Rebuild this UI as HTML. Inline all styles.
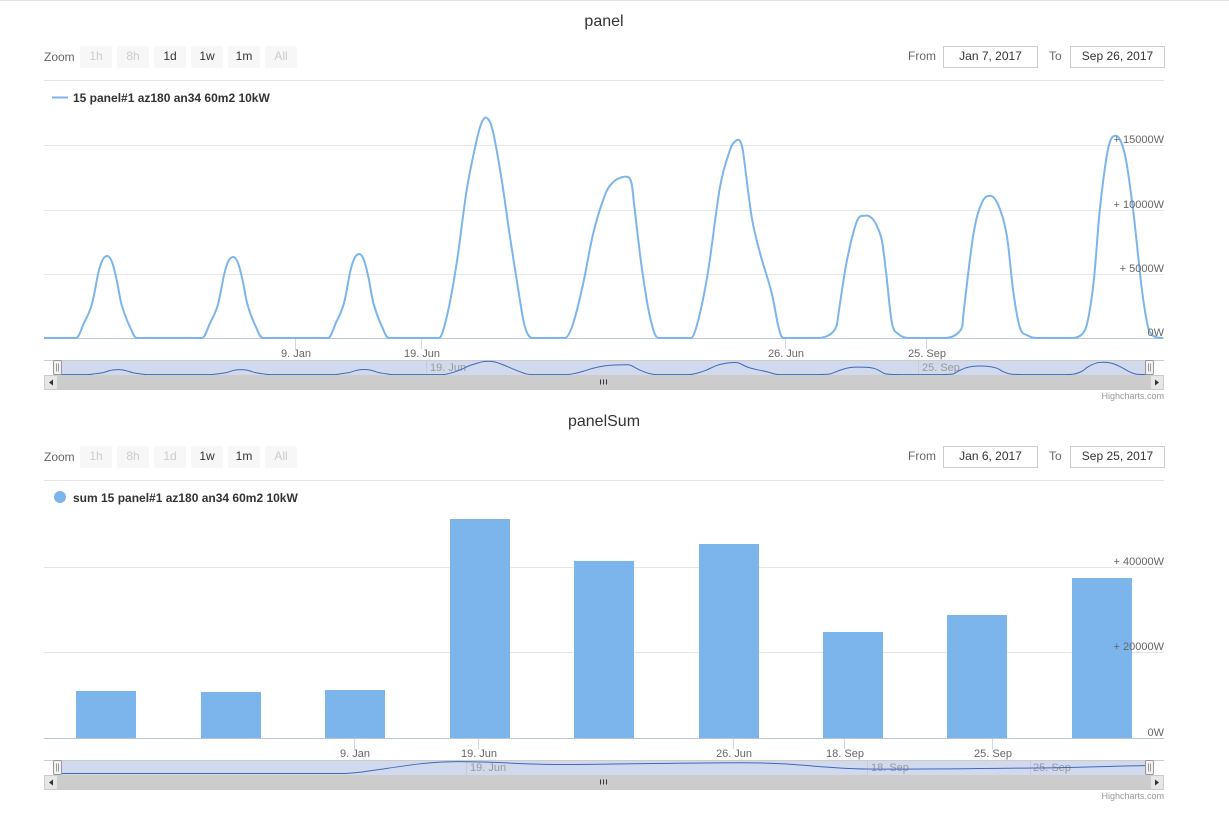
<!DOCTYPE html>
<html>
<head>
<meta charset="utf-8">
<style>
html,body{margin:0;padding:0;background:#fff;width:1229px;height:818px;overflow:hidden}
svg{display:block;font-family:"Liberation Sans",sans-serif}
.t{font-size:16px;fill:#333;text-anchor:middle}
.z{font-size:12px;fill:#666}
.b{fill:#f7f7f7}
.on{font-size:12px;fill:#333;text-anchor:middle}
.off{font-size:12px;fill:#ccc;text-anchor:middle}
.inp{fill:#fff;stroke:#ccc;stroke-width:1}
.v{font-size:12px;fill:#333;text-anchor:middle}
.lg{font-size:12px;font-weight:bold;fill:#333}
.g{stroke:#e6e6e6;stroke-width:1;fill:none}
.y{font-size:11px;fill:#666;text-anchor:end}
.x{font-size:11px;fill:#666;text-anchor:middle}
.tick{stroke:#ccd6eb;stroke-width:1}
.n{font-size:11px;fill:#999}
.nt{stroke:#c4cbdd;stroke-width:1}
.cr{font-size:9px;fill:#999;text-anchor:end}
.mask{fill:#6685c2;fill-opacity:.3}
.h{fill:#f2f2f2;stroke:#999;stroke-width:1}
.hl{stroke:#999;stroke-width:1}
.sb{fill:#ccc}
.sbb{fill:#e6e6e6;stroke:#ccc;stroke-width:1}
.ar{fill:#333}
</style>
</head>
<body>
<svg width="1229" height="818" viewBox="0 0 1229 818" xmlns="http://www.w3.org/2000/svg">
<defs>
<path id="l1" fill="none" vector-effect="non-scaling-stroke" d="M44 338L76 338C79 338 81.4 328.5 84 323S89.3 313.3 91.7 305S96.5 280.5 98.3 273S101 262.8 102.5 260S105.7 256 107.3 256S110.4 258 112 262S115.1 272.8 116.7 280S119.5 297.2 121.7 305S127.4 321.5 130 327S134 338 137 338L202 338C205 338 207.4 328.6 210 323.2S215.3 313.6 217.7 305.4S222.5 281.2 224.3 273.8S227 263.7 228.5 260.9S231.7 257 233.3 257S236.4 259 238 263S241.1 273.6 242.7 280.7S245.5 297.7 247.7 305.4S253.4 321.7 256 327.1S260 338 263 338L328 338C331 338 333.4 328.3 336 322.6S341.3 312.7 343.7 304.2S348.5 279.1 350.3 271.4S353 261 354.5 258.1S357.7 254 359.3 254S362.4 256.1 364 260.2S367.1 271.2 368.7 278.6S371.5 296.2 373.7 304.2S379.4 321.1 382 326.7S386 338 389 338L439 338C441.5 338 443.7 329.5 446.7 317S453.4 284.2 456.7 263S463.4 210.5 466.7 190S474.2 151.2 476.7 140S480 126.8 481.5 123S484.3 117.5 485.7 117.5S488.7 119.4 490 122S491.8 126.5 493.3 133S498.9 162.7 501.7 180S507.2 218.7 510 237S515.8 275 518.3 290S522.6 319 525 327S529.5 338 532.5 338L565 338C567.5 338 570.3 332.2 573.3 323S580 298 583.3 283S589.7 247.7 593.3 233S601.7 203.5 605 195S610.5 185 613.3 182S619.1 178.2 621.7 177.3S626.5 176.5 628 177S630.5 178.7 631.5 183S632.8 193 634 203S639 248 641.7 267S647.2 305.2 650 317S655 338 658.5 338L691 338C693 338 695.4 331.3 698.3 320S704.7 292.2 708.3 270S716.4 207 720 187S727.5 157.6 730 150S733.6 143.2 735 141.5S737.3 139.7 738.3 139.7S740.2 140.8 741 143S742.4 147.5 743.3 153S748.9 200.3 751.7 217S756.7 240.3 760 253S768.7 280.8 771.7 293S776.3 318.5 778.3 326S781 338 784 338L818 338C822 338 829 336.5 833.3 331.7S837.3 321 838.3 315S843.6 277.2 846.7 261.7S853.7 229.4 856.7 221.7S862.5 216.3 865 215.7S869.5 216.2 871.7 218S878.6 227.7 881 236.7S884.2 257.5 886 271.7S889.7 311.3 891.7 321.7S895.1 331.3 898.3 334S904 338 911 338L945 338C950 338 955 336.5 959.3 331.7S962.3 323 963.3 315S970.2 253.7 973.3 235S978.9 209.5 981.7 203S987.2 195.7 990 195.7S995.5 198.5 998.3 205S1004.2 220.5 1006.7 235S1011.1 276.2 1013.3 291.7S1017.5 320.7 1020 328S1025.3 334 1028.3 335.7S1033 338 1038 338L1072 338C1077 338 1082 336 1085 330S1090.8 305.3 1093.3 285S1097.5 230.8 1100 208S1105.6 160 1108.3 148S1113.2 135.7 1116 135.7S1122.1 142.3 1125 155S1130.5 189.5 1133.3 211.7S1139.2 268.6 1141.7 288S1146.3 320 1148.3 328S1155 338 1163 338"/>
<clipPath id="nc"><rect x="57" y="355" width="1093" height="25"/></clipPath>
</defs>

<rect x="0" y="0" width="1229" height="1" fill="#e5e5e5"/>

<!-- panel -->
<text class="t" x="604" y="26">panel</text>
<text class="z" x="44" y="61">Zoom</text>
<rect class="b" x="80" y="46" width="32" height="22" rx="2"/><text class="off" x="96" y="60">1h</text>
<rect class="b" x="117" y="46" width="32" height="22" rx="2"/><text class="off" x="133" y="60">8h</text>
<rect class="b" x="154" y="46" width="32" height="22" rx="2"/><text class="on" x="170" y="60">1d</text>
<rect class="b" x="191" y="46" width="32" height="22" rx="2"/><text class="on" x="207" y="60">1w</text>
<rect class="b" x="228" y="46" width="32" height="22" rx="2"/><text class="on" x="244" y="60">1m</text>
<rect class="b" x="265" y="46" width="32" height="22" rx="2"/><text class="off" x="281" y="60">All</text>
<text class="z" x="908" y="60">From</text>
<rect class="inp" x="943.5" y="46.5" width="94" height="21"/><text class="v" x="990.5" y="60">Jan 7, 2017</text>
<text class="z" x="1049" y="60">To</text>
<rect class="inp" x="1070.5" y="46.5" width="94" height="21"/><text class="v" x="1117.5" y="60">Sep 26, 2017</text>
<path class="g" d="M44 80.5H1164"/>
<path d="M52 97.5H68" stroke="#7cb5ec" stroke-width="2"/>
<text class="lg" x="73" y="102">15 panel#1 az180 an34 60m2 10kW</text>

<path class="g" d="M44 145.5H1164M44 210.5H1164M44 274.5H1164"/>
<path d="M44 338.5H1164" stroke="#b9c4d8" stroke-width="1"/>
<path class="tick" d="M295.5 339V349M421.5 339V349M785.5 339V349M926.5 339V349"/>
<use href="#l1" stroke="#7cb5ec" stroke-width="2"/>
<text class="y" x="1164" y="143">+ 15000W</text>
<text class="y" x="1164" y="208">+ 10000W</text>
<text class="y" x="1164" y="272">+ 5000W</text>
<text class="y" x="1164" y="336">0W</text>
<text class="x" x="296" y="357">9. Jan</text>
<text class="x" x="422" y="357">19. Jun</text>
<text class="x" x="786" y="357">26. Jun</text>
<text class="x" x="927" y="357">25. Sep</text>

<!-- navigator 1 -->
<rect class="mask" x="57" y="361" width="1093" height="14"/>
<path d="M44 360.5H1164" stroke="#ccc" stroke-width="1"/>
<path class="nt" d="M426.5 361V375M918.5 361V375"/>
<text class="n" x="430" y="371">19. Jun</text>
<text class="n" x="922" y="371">25. Sep</text>
<g clip-path="url(#nc)"><use href="#l1" transform="matrix(.977 0 0 .0608 13.5 354.05)" stroke="#3e68bc" stroke-width="1"/></g>
<rect class="sb" x="44" y="375" width="1120" height="15"/>
<rect class="sbb" x="44.5" y="375.5" width="13" height="14"/>
<rect class="sbb" x="1150.5" y="375.5" width="13" height="14"/>
<path class="ar" d="M49 382.5L53 379.5V385.5ZM1159 382.5L1155 379.5V385.5Z"/>
<path d="M600.5 379.5V384.5M603.5 379.5V384.5M606.5 379.5V384.5" stroke="#333" stroke-width="1"/>
<rect class="h" x="53.5" y="360.5" width="8" height="14" rx="1"/>
<path class="hl" d="M56.5 363.5V371.5M58.5 363.5V371.5"/>
<rect class="h" x="1145.5" y="360.5" width="8" height="14" rx="1"/>
<path class="hl" d="M1148.5 363.5V371.5M1150.5 363.5V371.5"/>
<text class="cr" x="1164" y="399">Highcharts.com</text>

<!-- panelSum -->
<text class="t" x="604" y="426">panelSum</text>
<text class="z" x="44" y="461">Zoom</text>
<rect class="b" x="80" y="446" width="32" height="22" rx="2"/><text class="off" x="96" y="460">1h</text>
<rect class="b" x="117" y="446" width="32" height="22" rx="2"/><text class="off" x="133" y="460">8h</text>
<rect class="b" x="154" y="446" width="32" height="22" rx="2"/><text class="off" x="170" y="460">1d</text>
<rect class="b" x="191" y="446" width="32" height="22" rx="2"/><text class="on" x="207" y="460">1w</text>
<rect class="b" x="228" y="446" width="32" height="22" rx="2"/><text class="on" x="244" y="460">1m</text>
<rect class="b" x="265" y="446" width="32" height="22" rx="2"/><text class="off" x="281" y="460">All</text>
<text class="z" x="908" y="460">From</text>
<rect class="inp" x="943.5" y="446.5" width="94" height="21"/><text class="v" x="990.5" y="460">Jan 6, 2017</text>
<text class="z" x="1049" y="460">To</text>
<rect class="inp" x="1070.5" y="446.5" width="94" height="21"/><text class="v" x="1117.5" y="460">Sep 25, 2017</text>
<path class="g" d="M44 480.5H1164"/>
<circle cx="60" cy="497" r="6" fill="#7cb5ec"/>
<text class="lg" x="73" y="502">sum 15 panel#1 az180 an34 60m2 10kW</text>

<path class="g" d="M44 567.5H1164M44 652.5H1164"/>
<g fill="#7cb5ec">
<rect x="76" y="691" width="60" height="47"/>
<rect x="201" y="692" width="60" height="46"/>
<rect x="325" y="690" width="60" height="48"/>
<rect x="450" y="519" width="60" height="219"/>
<rect x="574" y="561" width="60" height="177"/>
<rect x="699" y="544" width="60" height="194"/>
<rect x="823" y="632" width="60" height="106"/>
<rect x="947" y="615" width="60" height="123"/>
<rect x="1072" y="578" width="60" height="160"/>
</g>
<path d="M44 738.5H1164" stroke="#b9c4d8" stroke-width="1"/>
<path class="tick" d="M354.5 739V749M478.5 739V749M733.5 739V749M844.5 739V749M992.5 739V749"/>
<text class="y" x="1164" y="565">+ 40000W</text>
<text class="y" x="1164" y="650">+ 20000W</text>
<text class="y" x="1164" y="736">0W</text>
<text class="x" x="355" y="757">9. Jan</text>
<text class="x" x="479" y="757">19. Jun</text>
<text class="x" x="734" y="757">26. Jun</text>
<text class="x" x="845" y="757">18. Sep</text>
<text class="x" x="993" y="757">25. Sep</text>

<!-- navigator 2 -->
<rect class="mask" x="57" y="761" width="1093" height="14"/>
<path d="M44 760.5H1164" stroke="#ccc" stroke-width="1"/>
<path class="nt" d="M466.5 761V775M867.5 761V775M1030.5 761V775"/>
<text class="n" x="470" y="771">19. Jun</text>
<text class="n" x="871" y="771">18. Sep</text>
<text class="n" x="1033" y="771">25. Sep</text>
<path d="M57 773.5L340 773.5C370 773.5 410 762 453 761.7S520 764.5 560 764.5S680 762.7 740 762.7S820 768.5 867 769S980 768.5 1033 768S1110 766 1150 765.5" fill="none" stroke="#3e68bc" stroke-width="1"/>
<rect class="sb" x="44" y="775" width="1120" height="15"/>
<rect class="sbb" x="44.5" y="775.5" width="13" height="14"/>
<rect class="sbb" x="1150.5" y="775.5" width="13" height="14"/>
<path class="ar" d="M49 782.5L53 779.5V785.5ZM1159 782.5L1155 779.5V785.5Z"/>
<path d="M600.5 779.5V784.5M603.5 779.5V784.5M606.5 779.5V784.5" stroke="#333" stroke-width="1"/>
<rect class="h" x="53.5" y="760.5" width="8" height="14" rx="1"/>
<path class="hl" d="M56.5 763.5V771.5M58.5 763.5V771.5"/>
<rect class="h" x="1145.5" y="760.5" width="8" height="14" rx="1"/>
<path class="hl" d="M1148.5 763.5V771.5M1150.5 763.5V771.5"/>
<text class="cr" x="1164" y="799">Highcharts.com</text>
</svg>
</body>
</html>
